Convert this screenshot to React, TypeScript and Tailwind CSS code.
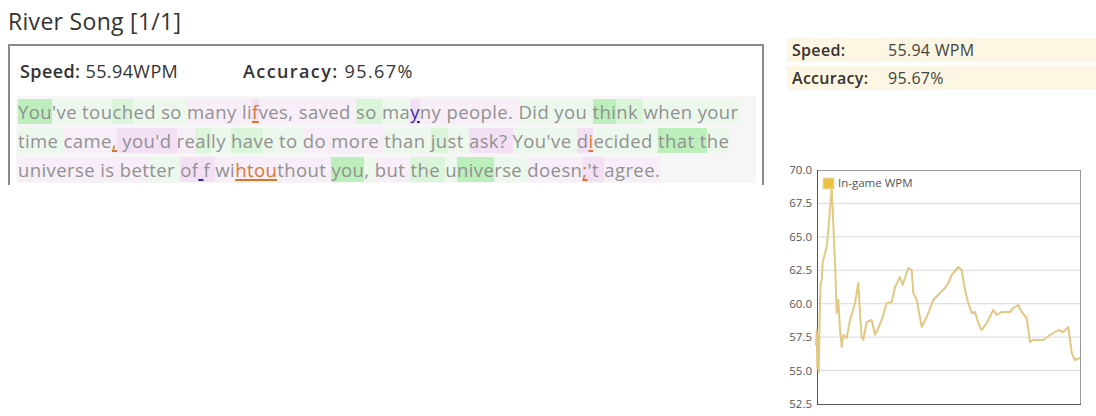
import React from "react";

type Seg = [string, string, ("o" | "p")?];

const G3 = "bg-[#bcefbc]";
const G2 = "bg-[#dbf5db]";
const G1 = "bg-[#edf8ed]";
const P1 = "bg-[#f7eef7]";
const P2 = "bg-[#f4e0f4]";

const lines: Seg[][] = [
  [
    ["You", G3], ["'ve tou", G1], ["ch", G2], ["ed so ", G1], ["many ", P1], ["li", P1], ["f", P2, "o"],
    ["ves, ", P1], ["saved ", P1], ["so ", G2], ["ma", G1], ["y", P2, "p"], ["ny ", P1], ["people. ", P1],
    ["Did ", G1], ["you ", G1], ["thi", G3], ["nk ", G2], ["when ", G1], ["your", G1],
  ],
  [
    ["time ", G1], ["came", P1], [",", P1, "o"], [" you'd ", P2], ["re", P1], ["al", G2], ["ly ", G1],
    ["hav", G2], ["e to ", G1], ["do ", P1], ["more ", P1], ["than ", G1], ["ju", G2], ["st ", G1],
    ["ask? ", P2], ["You've ", G1], ["d", P2], ["i", P2, "o"], ["ecided ", G1], ["that t", G3], ["he", G1],
  ],
  [
    ["universe ", P1], ["is ", P1], ["bet", P1], ["ter ", G1], ["of", P2], [" ", P2, "p"], ["f ", P2],
    ["wi", P1], ["htou", P1, "o"], ["thout ", P1], ["you", G3], [", ", G1], ["but ", P1], ["the ", G2],
    ["u", G1], ["nive", G3], ["rse ", G1], ["doesn", P1], [";", P2, "o"], ["'t ", P2], ["agree.", P1],
  ],
];

// [x in zoom units (real = 780 + x/3), real y]
const pts: [number, number][] = [
  [108, 345], [110, 330], [112, 368], [114, 335], [116, 372], [118, 340], [120, 300], [122, 283],
  [125, 280], [128, 262], [132, 257], [140, 247], [146, 225], [152, 200], [155, 188], [158, 210],
  [162, 240], [165, 262], [168, 292], [170, 313], [175, 300], [180, 330], [185, 347], [190, 335],
  [200, 338], [210, 320], [225, 303], [235, 283], [240, 313], [245, 337], [250, 340], [260, 322],
  [275, 320], [285, 335], [295, 328], [305, 320], [320, 303], [335, 302], [345, 287], [360, 277],
  [368, 285], [385, 268], [395, 270], [400, 293], [410, 300], [425, 327], [440, 317], [460, 300],
  [480, 293], [495, 288], [505, 283], [515, 275], [535, 267], [545, 270], [550, 280], [555, 290],
  [565, 303], [575, 313], [585, 312], [595, 323], [605, 330], [620, 323], [640, 310], [650, 315],
  [665, 312], [690, 312], [700, 308], [715, 305], [725, 312], [740, 318], [750, 342], [760, 340],
  [790, 340], [810, 335], [835, 330], [850, 332], [865, 327], [875, 353], [885, 360], [900, 358],
];

const ticks = ["70.0", "67.5", "65.0", "62.5", "60.0", "57.5", "55.0", "52.5"];

function Chart() {
  const top = 10;
  const step = 33.43;
  const poly = pts.map(([x, y]) => `${(x / 3).toFixed(1)},${y - 160}`).join(" ");
  return (
    <svg width="316" height="256" className="block">
      {ticks.map((t, i) => {
        const y = top + i * step;
        return (
          <g key={t}>
            {i > 0 && i < ticks.length - 1 && (
              <line x1="37" x2="300" y1={y} y2={y} stroke="#d9d9d9" strokeWidth="1" />
            )}
            <text x="32" y={y + 4} textAnchor="end" fontSize="11.5" fill="#555" fontFamily="'Open Sans', sans-serif">
              {t}
            </text>
          </g>
        );
      })}
      <rect x="37.5" y={top + 0.5} width="263" height={step * 7} fill="none" stroke="#999" strokeWidth="1" />
      <line x1="37.5" x2="37.5" y1={top} y2={top + step * 7} stroke="#555" strokeWidth="1" />
      <line x1="37" x2="301" y1={top + step * 7 + 0.5} y2={top + step * 7 + 0.5} stroke="#555" strokeWidth="1" />
      <polyline points={poly} fill="none" stroke="#e2c882" strokeWidth="2" strokeLinejoin="round" />
      <rect x="43" y="18" width="11" height="11" fill="#edc240" stroke="#e6dcc0" strokeWidth="1" />
      <text x="58" y="27" fontSize="11.5" fill="#555" fontFamily="'Open Sans', sans-serif">
        In-game WPM
      </text>
    </svg>
  );
}

export default function App() {
  return (
    <div className="w-[1096px] h-[416px] bg-white overflow-hidden flex font-['Open_Sans',sans-serif]">
      {/* Left column */}
      <div className="w-[764px] pl-2 pt-[6px] shrink-0">
        <h1 className="text-[23px] leading-[30px] tracking-[0.3px] text-[#333] font-normal">River Song [1/1]</h1>
        <div className="mt-[8px] border-2 border-b-0 border-[#8a8a8a] h-[141px] px-[6px]">
          <div className="flex items-center h-[50px] pl-[4px] text-[18px] tracking-[0.4px] text-[#333]">
            <span className="w-[223px]">
              <b className="font-semibold">Speed:</b> 55.94WPM
            </span>
            <span className="tracking-[1.4px]">
              <b className="font-semibold">Accuracy:</b> 95.67%
            </span>
          </div>
          <div className="bg-[#f6f6f6] h-[87px] pt-[1px] text-[18.5px] leading-[29px] text-[#919191] tracking-[0.4px]">
            {lines.map((line, i) => (
              <div key={i} className="whitespace-pre pl-[2px]">
                {line.map(([t, bg, err], j) => (
                  <span
                    key={j}
                    className={
                      bg +
                      (err === "o"
                        ? " text-[#d9782a] font-medium underline decoration-2 underline-offset-2"
                        : err === "p"
                        ? " text-[#3b2aa8] font-medium underline decoration-2 underline-offset-2"
                        : "")
                    }
                  >
                    {t}
                  </span>
                ))}
              </div>
            ))}
          </div>
        </div>
      </div>

      {/* Right column */}
      <div className="flex-1 pl-[23px]">
        <div className="mt-[38px] flex flex-col gap-[4px] text-[16px] tracking-[0.3px] text-[#444]">
          <div className="flex items-center h-[24px] bg-[#fcf6e2] pl-[5px]">
            <span className="w-[96px] font-semibold text-[#333]">Speed:</span>
            <span>55.94 WPM</span>
          </div>
          <div className="flex items-center h-[24px] bg-[#fcf6e2] pl-[5px]">
            <span className="w-[96px] font-semibold text-[#333]">Accuracy:</span>
            <span>95.67%</span>
          </div>
        </div>
        <div className="mt-[70px] -ml-[7px]">
          <Chart />
        </div>
      </div>
    </div>
  );
}
